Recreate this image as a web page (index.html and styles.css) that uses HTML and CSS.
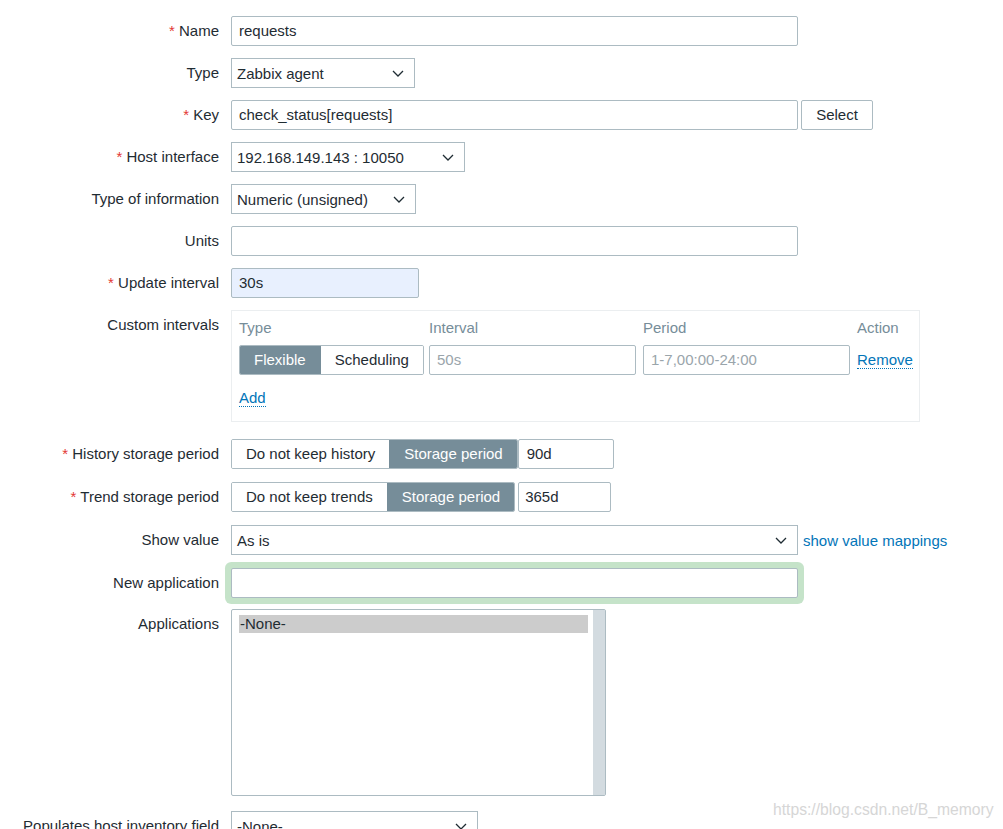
FILE: index.html
```html
<!DOCTYPE html>
<html>
<head>
<meta charset="utf-8">
<title>Item</title>
<link rel="stylesheet" href="styles.css">
</head>
<body>
<div class="form">
  <div class="row">
    <div class="lbl"><span class="req">*</span> Name</div>
    <div class="ctl"><div class="input w-long">requests</div></div>
  </div>
  <div class="row">
    <div class="lbl">Type</div>
    <div class="ctl"><div class="select w-type"><span>Zabbix agent</span><svg class="chev" width="12" height="7" viewBox="0 0 12 7"><path d="M1 1l5 5 5-5" fill="none" stroke="#1f2c33" stroke-width="1.3"/></svg></div></div>
  </div>
  <div class="row">
    <div class="lbl"><span class="req">*</span> Key</div>
    <div class="ctl"><div class="input w-long">check_status[requests]</div><div class="btn">Select</div></div>
  </div>
  <div class="row">
    <div class="lbl"><span class="req">*</span> Host interface</div>
    <div class="ctl"><div class="select w-host"><span>192.168.149.143 : 10050</span><svg class="chev" width="12" height="7" viewBox="0 0 12 7"><path d="M1 1l5 5 5-5" fill="none" stroke="#1f2c33" stroke-width="1.3"/></svg></div></div>
  </div>
  <div class="row">
    <div class="lbl">Type of information</div>
    <div class="ctl"><div class="select w-info"><span>Numeric (unsigned)</span><svg class="chev" width="12" height="7" viewBox="0 0 12 7"><path d="M1 1l5 5 5-5" fill="none" stroke="#1f2c33" stroke-width="1.3"/></svg></div></div>
  </div>
  <div class="row">
    <div class="lbl">Units</div>
    <div class="ctl"><div class="input w-long"></div></div>
  </div>
  <div class="row">
    <div class="lbl"><span class="req">*</span> Update interval</div>
    <div class="ctl"><div class="input w-upd autofill">30s</div></div>
  </div>
  <div class="row row-custom">
    <div class="lbl">Custom intervals</div>
    <div class="ctl">
      <div class="cbox">
        <div class="cgrid">
          <div class="th">Type</div>
          <div class="th">Interval</div>
          <div class="th">Period</div>
          <div class="th">Action</div>
          <div class="seg"><span class="on">Flexible</span><span>Scheduling</span></div>
          <div class="input ph">50s</div>
          <div class="input ph">1-7,00:00-24:00</div>
          <div class="act"><a class="link">Remove</a></div>
        </div>
        <div class="addline"><a class="link">Add</a></div>
      </div>
    </div>
  </div>
  <div class="row row-13">
    <div class="lbl"><span class="req">*</span> History storage period</div>
    <div class="ctl"><div class="seg seg-main"><span>Do not keep history</span><span class="on">Storage period</span></div><div class="input w-hist">90d</div></div>
  </div>
  <div class="row row-13">
    <div class="lbl"><span class="req">*</span> Trend storage period</div>
    <div class="ctl"><div class="seg seg-main"><span>Do not keep trends</span><span class="on">Storage period</span></div><div class="input w-trend">365d</div></div>
  </div>
  <div class="row row-13">
    <div class="lbl">Show value</div>
    <div class="ctl"><div class="select w-long"><span>As is</span><svg class="chev" width="12" height="7" viewBox="0 0 12 7"><path d="M1 1l5 5 5-5" fill="none" stroke="#1f2c33" stroke-width="1.3"/></svg></div><a class="plain-link">show value mappings</a></div>
  </div>
  <div class="row row-11">
    <div class="lbl">New application</div>
    <div class="ctl"><div class="input w-long focus"></div></div>
  </div>
  <div class="row row-15">
    <div class="lbl">Applications</div>
    <div class="ctl">
      <div class="listbox">
        <div class="lb-body"><div class="opt">-None-</div></div>
        <div class="lb-scroll"></div>
      </div>
    </div>
  </div>
  <div class="row">
    <div class="lbl">Populates host inventory field</div>
    <div class="ctl"><div class="select w-inv"><span>-None-</span><svg class="chev" width="12" height="7" viewBox="0 0 12 7"><path d="M1 1l5 5 5-5" fill="none" stroke="#1f2c33" stroke-width="1.3"/></svg></div></div>
  </div>
</div>
<div class="watermark">https://blog.csdn.net/B_memory</div>
</body>
</html>
```
FILE: styles.css
```css
html, body {
  margin: 0;
  padding: 0;
  background: #ffffff;
  height: 829px;
  overflow: hidden;
}
body {
  font-family: "Liberation Sans", Arial, sans-serif;
  font-size: 15px;
  color: #1f2c33;
  position: relative;
}
.form {
  padding-top: 16px;
  display: flex;
  flex-direction: column;
}
.row {
  display: grid;
  grid-template-columns: 219px 1fr;
  column-gap: 12px;
  margin-bottom: 12px;
}
.row-custom { margin-bottom: 17px; }
.row-13 { margin-bottom: 13px; }
.row-11 { margin-bottom: 11px; }
.row-15 { margin-bottom: 15px; }
.lbl {
  text-align: right;
  line-height: 30px;
  white-space: nowrap;
}
.req { color: #e33734; }
.ctl {
  display: flex;
  align-items: center;
  align-self: start;
}
.input {
  box-sizing: border-box;
  height: 30px;
  border: 1px solid #acbbc2;
  border-radius: 2px;
  background: #fff;
  padding: 0 7px;
  line-height: 28px;
  white-space: nowrap;
  overflow: hidden;
}
.w-long { width: 567px; }
.w-upd { width: 188px; }
.w-hist { width: 96px; margin-left: 0; padding-left: 8px; }
.w-trend { width: 93px; margin-left: 3px; padding-left: 6px; }
.autofill { background: #e8f0fe; }
.ph { color: #9aa5ab; }
.focus {
  box-shadow: 0 0 0 6px #c5e3c9;
  border-radius: 2px;
}
.select {
  box-sizing: border-box;
  height: 30px;
  border: 1px solid #acbbc2;
  background: #fff;
  padding: 0 10px 0 5px;
  display: flex;
  align-items: center;
  justify-content: space-between;
  white-space: nowrap;
}
.w-type { width: 184px; }
.w-host { width: 234px; }
.w-info { width: 185px; }
.w-inv { width: 247px; }
.chev { display: block; flex: none; margin-top: 1px; }
.btn {
  box-sizing: border-box;
  height: 30px;
  width: 72px;
  margin-left: 3px;
  border: 1px solid #acbbc2;
  border-radius: 2px;
  background: #fff;
  text-align: center;
  line-height: 28px;
}
.cbox {
  box-sizing: border-box;
  width: 689px;
  height: 112px;
  border: 1px solid #ebeef0;
  padding: 7px 7px 15px 7px;
}
.cgrid {
  display: grid;
  grid-template-columns: 183px 207px 207px auto;
  column-gap: 7px;
  row-gap: 8px;
  align-items: center;
}
.th {
  color: #768d99;
  line-height: 18px;
  height: 18px;
  padding-top: 1px;
}
.seg {
  display: flex;
  height: 30px;
  box-sizing: border-box;
  border: 1px solid #acbbc2;
  border-radius: 2px;
  overflow: hidden;
  width: max-content;
}
.seg span {
  padding: 0 14px;
  line-height: 28px;
  white-space: nowrap;
  background: #fff;
}
.seg span.on {
  background: #768d99;
  color: #fff;
}
.seg span + span { border-left: 1px solid #acbbc2; }
.seg span.on + span, .seg span + span.on { border-left-color: #768d99; }
.act { line-height: 18px; }
.link {
  color: #0275b8;
  text-decoration: none;
  border-bottom: 1px dotted #0275b8;
  cursor: pointer;
}
.addline {
  margin-top: 14px;
  line-height: 18px;
  height: 18px;
}
.plain-link {
  color: #0275b8;
  margin-left: 5px;
  white-space: nowrap;
}
.listbox {
  box-sizing: border-box;
  width: 375px;
  height: 187px;
  border: 1px solid #acbbc2;
  border-radius: 2px;
  display: flex;
  background: #fff;
}
.lb-body {
  flex: 1;
  padding: 5px 5px 0 7px;
}
.opt {
  background: #cccccc;
  line-height: 18px;
  height: 18px;
  padding-left: 1px;
}
.lb-scroll {
  width: 12px;
  background: #d3dbe0;
}
.watermark {
  position: absolute;
  left: 773px;
  top: 801px;
  color: #d6d6d6;
  font-size: 15.7px;
  font-family: "Liberation Sans", Arial, sans-serif;
  white-space: nowrap;
}
```
